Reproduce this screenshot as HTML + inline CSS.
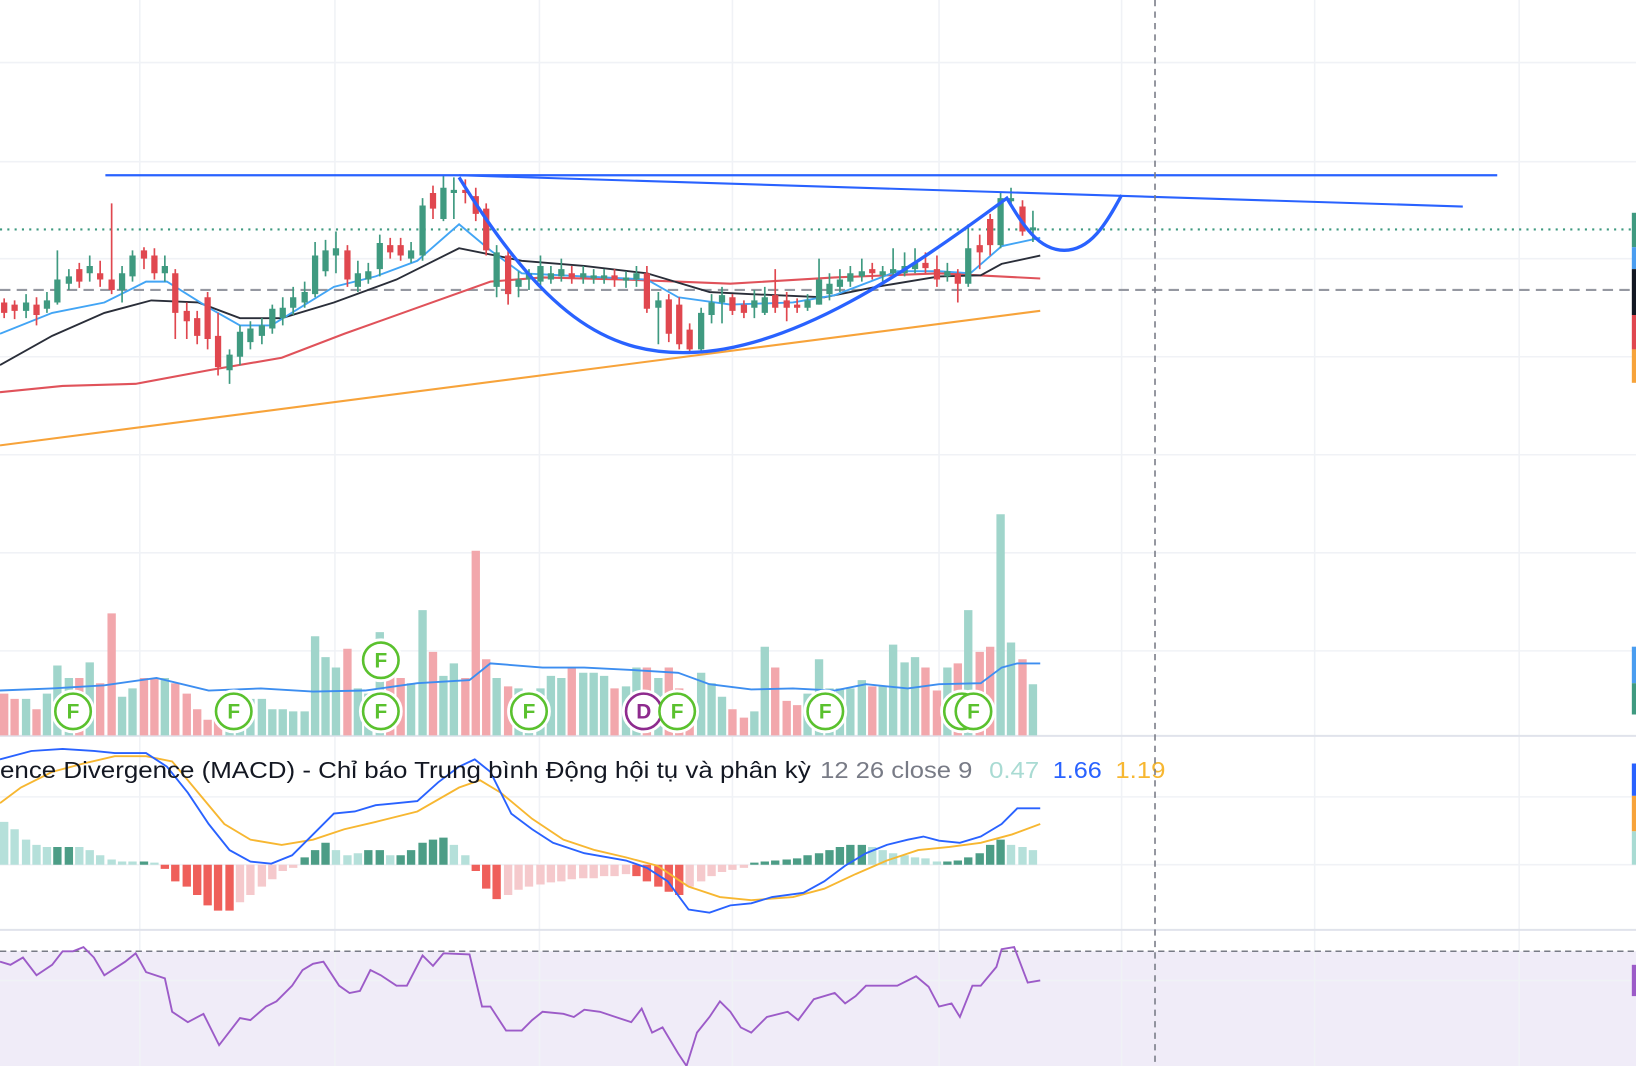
<!DOCTYPE html>
<html><head><meta charset="utf-8"><style>
html,body{margin:0;padding:0;background:#fff;overflow:hidden}
svg{display:block}
text{font-family:"Liberation Sans","Noto Sans CJK SC",sans-serif}
</style></head><body>
<svg width="1636" height="1066" viewBox="0 0 1568 1022" preserveAspectRatio="none" xmlns="http://www.w3.org/2000/svg">
<rect width="1568" height="1022" fill="#fff"/>
<!-- RSI band -->
<rect x="0" y="912" width="1568" height="110" fill="#f0ecf8"/>
<!-- grid -->
<g stroke="#f0f2f6" stroke-width="1.5">
<path d="M134 0V1022M321 0V1022M517 0V1022M702 0V1022M900 0V1022M1075 0V1022M1260 0V1022M1456 0V1022"/>
<path d="M0 60H1568M0 155H1568M0 248H1568M0 342H1568M0 436H1568M0 530H1568M0 624H1568M0 764H1568M0 829H1568M0 940H1568"/>
</g>
<!-- pane separators -->
<path d="M0 705.5H1568M0 891.5H1568" stroke="#e0e3eb" stroke-width="2"/>
<!-- price lines -->
<path d="M0 220H1568" stroke="#3f9a80" stroke-width="2" stroke-dasharray="2 5"/>
<path d="M0 278H1568" stroke="#9598a1" stroke-width="2" stroke-dasharray="10 6"/>
<path d="M0 912H1568" stroke="#787b86" stroke-width="1.5" stroke-dasharray="6 4"/>
<!-- MAs -->
<path d="M0 427L997 298" stroke="#f7a33a" stroke-width="2" fill="none"/>
<path d="M0 376L60 370L130 368L200 355L270 343L330 320L400 295L470 270L520 266L600 268L700 272L800 266L900 262L997 267" stroke="#e0525a" stroke-width="2" fill="none"/>
<path d="M0 350L50 322L100 300L145 288L190 290L230 305L270 305L320 290L380 268L440 238L500 250L560 255L620 262L680 280L720 282L790 285L840 275L900 265L940 264L960 253L997 245" stroke="#2a2e39" stroke-width="1.8" fill="none"/>
<path d="M0 320L50 300L100 290L140 270L160 270L200 295L230 312L260 312L320 275L360 265L400 250L440 215L470 240L500 262L560 265L620 268L650 285L700 292L760 290L800 283L860 260L900 260L930 262L960 236L997 228" stroke="#42a5f5" stroke-width="1.8" fill="none"/>
<!-- candles green -->
<path stroke="#3f9a80" stroke-width="1.6" d="M25 282V305M45 280V300M55 240V292M66 258V278M86 245V270M117 255V290M127 240V270M158 245V270M220 335V368M230 312V350M240 308V335M251 305V330M261 292V320M271 285V312M281 275V302M292 270V295M302 232V285M312 230V265M322 222V262M343 250V280M353 252V272M364 225V265M394 232V252M405 190V250M425 168V212M435 170V210M476 235V285M497 260V285M507 258V278M518 245V275M528 255V272M538 248V270M559 255V272M569 258V272M579 258V272M600 260V276M610 255V275M631 280V330M672 295V338M682 282V310M692 275V310M723 278V305M733 275V302M774 282V298M785 248V292M795 262V288M805 258V280M815 255V275M826 248V270M846 255V270M856 238V265M867 242V265M877 238V262M908 252V270M928 215V275M959 185V238M969 180V198M990 202V232"/>
<path fill="#3f9a80" d="M22 290h6V298h-6zM42 288h6V296h-6zM52 268h6V290h-6zM63 265h6V272h-6zM83 255h6V262h-6zM114 262h6V278h-6zM124 245h6V265h-6zM155 255h6V262h-6zM217 340h6V355h-6zM227 318h6V342h-6zM237 315h6V328h-6zM248 312h6V322h-6zM258 296h6V315h-6zM268 295h6V305h-6zM278 285h6V295h-6zM289 280h6V290h-6zM299 245h6V282h-6zM309 240h6V260h-6zM319 238h6V245h-6zM340 262h6V275h-6zM350 260h6V268h-6zM361 233h6V258h-6zM391 240h6V248h-6zM402 197h6V245h-6zM422 180h6V210h-6zM432 182h6V185h-6zM473 242h6V275h-6zM494 268h6V275h-6zM504 262h6V268h-6zM515 255h6V270h-6zM525 262h6V268h-6zM535 258h6V265h-6zM556 262h6V266h-6zM566 264h6V267h-6zM576 264h6V267h-6zM597 266h6V269h-6zM607 262h6V268h-6zM628 288h6V295h-6zM669 300h6V335h-6zM679 290h6V302h-6zM689 283h6V290h-6zM720 288h6V295h-6zM730 285h6V300h-6zM771 288h6V295h-6zM782 268h6V292h-6zM792 272h6V282h-6zM802 268h6V275h-6zM812 262h6V270h-6zM823 260h6V265h-6zM843 260h6V264h-6zM853 258h6V262h-6zM864 255h6V262h-6zM874 252h6V258h-6zM905 260h6V265h-6zM925 238h6V272h-6zM956 190h6V235h-6zM966 190h6V193h-6zM987 218h6V221h-6z"/>
<!-- candles red -->
<path stroke="#e0474f" stroke-width="1.6" d="M4 286V305M14 288V306M35 285V312M76 252V276M96 250V275M107 195V282M138 237V258M148 238V268M168 258V325M179 290V325M189 298V330M199 280V335M209 300V360M333 235V275M374 228V248M384 228V250M415 178V210M446 172V195M456 180V212M466 195V245M487 240V292M548 255V272M589 258V275M620 255V300M641 282V328M651 285V335M661 310V338M702 282V302M713 288V305M743 258V300M754 280V308M764 286V300M836 252V268M887 242V262M898 245V275M918 258V290M939 225V258M949 205V245M980 192V226"/>
<path fill="#e0474f" d="M1 290h6V300h-6zM11 292h6V298h-6zM32 292h6V302h-6zM73 258h6V270h-6zM93 262h6V268h-6zM104 268h6V278h-6zM135 240h6V248h-6zM145 245h6V262h-6zM165 262h6V300h-6zM176 298h6V308h-6zM186 305h6V322h-6zM196 285h6V325h-6zM206 322h6V352h-6zM330 240h6V268h-6zM371 235h6V242h-6zM381 235h6V245h-6zM412 185h6V200h-6zM443 182h6V185h-6zM453 188h6V205h-6zM463 200h6V240h-6zM484 245h6V282h-6zM545 262h6V266h-6zM586 264h6V268h-6zM617 262h6V296h-6zM638 287h6V320h-6zM648 292h6V330h-6zM658 316h6V335h-6zM699 285h6V298h-6zM710 292h6V300h-6zM740 283h6V295h-6zM751 288h6V295h-6zM761 292h6V295h-6zM833 258h6V262h-6zM884 252h6V257h-6zM895 258h6V268h-6zM915 262h6V272h-6zM936 235h6V242h-6zM946 210h6V235h-6zM977 198h6V222h-6z"/>
<!-- pattern drawings -->
<path d="M101 168H1435" stroke="#2962ff" stroke-width="2.2"/>
<path d="M440 168L1402 198" stroke="#2962ff" stroke-width="2"/>
<path d="M440 170C520 300 580 340 660 338C760 336 870 260 965 190C980 215 995 240 1020 240C1045 240 1060 215 1075 187" stroke="#2962ff" stroke-width="3.2" fill="none"/>
<!-- volume -->
<path fill="#a0d5cb" d="M21 670h8V705h-8zM41 665h8V705h-8zM51 638h8V705h-8zM62 650h8V705h-8zM82 635h8V705h-8zM113 668h8V705h-8zM123 660h8V705h-8zM154 650h8V705h-8zM216 662h8V705h-8zM226 672h8V705h-8zM236 670h8V705h-8zM247 670h8V705h-8zM257 680h8V705h-8zM267 680h8V705h-8zM277 682h8V705h-8zM288 682h8V705h-8zM298 610h8V705h-8zM308 630h8V705h-8zM318 640h8V705h-8zM339 660h8V705h-8zM349 665h8V705h-8zM360 606h8V705h-8zM390 655h8V705h-8zM401 585h8V705h-8zM421 648h8V705h-8zM431 636h8V705h-8zM472 650h8V705h-8zM493 660h8V705h-8zM503 665h8V705h-8zM514 660h8V705h-8zM524 648h8V705h-8zM534 650h8V705h-8zM555 645h8V705h-8zM565 645h8V705h-8zM575 648h8V705h-8zM596 658h8V705h-8zM606 640h8V705h-8zM627 650h8V705h-8zM668 645h8V705h-8zM678 655h8V705h-8zM688 668h8V705h-8zM719 682h8V705h-8zM729 620h8V705h-8zM770 665h8V705h-8zM781 632h8V705h-8zM791 660h8V705h-8zM801 660h8V705h-8zM811 660h8V705h-8zM822 652h8V705h-8zM842 658h8V705h-8zM852 618h8V705h-8zM863 635h8V705h-8zM873 630h8V705h-8zM904 640h8V705h-8zM924 585h8V705h-8zM955 493h8V705h-8zM965 616h8V705h-8zM986 656h8V705h-8z"/>
<path fill="#f2a7ac" d="M0 665h8V705h-8zM10 670h8V705h-8zM31 680h8V705h-8zM72 650h8V705h-8zM92 655h8V705h-8zM103 588h8V705h-8zM134 650h8V705h-8zM144 650h8V705h-8zM164 655h8V705h-8zM175 665h8V705h-8zM185 680h8V705h-8zM195 690h8V705h-8zM205 690h8V705h-8zM329 622h8V705h-8zM370 640h8V705h-8zM380 650h8V705h-8zM411 625h8V705h-8zM442 650h8V705h-8zM452 528h8V705h-8zM462 632h8V705h-8zM483 658h8V705h-8zM544 640h8V705h-8zM585 660h8V705h-8zM616 640h8V705h-8zM637 640h8V705h-8zM647 660h8V705h-8zM657 670h8V705h-8zM698 680h8V705h-8zM709 688h8V705h-8zM739 640h8V705h-8zM750 672h8V705h-8zM760 676h8V705h-8zM832 658h8V705h-8zM883 640h8V705h-8zM894 662h8V705h-8zM914 636h8V705h-8zM935 625h8V705h-8zM945 620h8V705h-8zM976 632h8V705h-8z"/>
<path d="M0 662L50 660L100 657L150 650L200 662L250 660L300 663L350 662L400 655L450 652L470 636L520 640L560 640L600 642L650 645L680 656L720 661L760 660L800 662L830 656L870 660L900 656L940 655L960 640L975 636L997 636" stroke="#3d8ef0" stroke-width="1.8" fill="none"/>
<!-- markers -->
<g font-size="20" font-weight="bold" text-anchor="middle">
<g stroke="#fff" stroke-width="6" fill="none">
<circle cx="70" cy="682" r="18"/><circle cx="224" cy="682" r="18"/><circle cx="365" cy="682" r="18"/><circle cx="365" cy="633" r="18"/><circle cx="507" cy="682" r="18"/><circle cx="617" cy="682" r="18"/><circle cx="649" cy="682" r="18"/><circle cx="791" cy="682" r="18"/><circle cx="922" cy="682" r="18"/><circle cx="933" cy="682" r="18"/>
</g>
<g stroke="#5ac12e" stroke-width="2.5" fill="#fff">
<circle cx="70" cy="682" r="17"/><circle cx="224" cy="682" r="17"/><circle cx="365" cy="682" r="17"/><circle cx="365" cy="633" r="17"/><circle cx="507" cy="682" r="17"/><circle cx="791" cy="682" r="17"/><circle cx="922" cy="682" r="17"/><circle cx="933" cy="682" r="17"/>
</g>
<circle cx="617" cy="682" r="17" stroke="#8e2b8e" stroke-width="2.5" fill="#fff"/>
<circle cx="649" cy="682" r="17" stroke="#5ac12e" stroke-width="2.5" fill="#fff"/>
<g fill="#5ac12e"><text x="70" y="689">F</text><text x="224" y="689">F</text><text x="365" y="689">F</text><text x="365" y="640">F</text><text x="507" y="689">F</text><text x="649" y="689">F</text><text x="791" y="689">F</text><text x="933" y="689">F</text></g>
<text x="617" y="689" fill="#8e2b8e">D</text>
</g>
<!-- MACD histogram -->
<path fill="#4c9d86" d="M51 812h8V829h-8zM62 812h8V829h-8zM134 826h8V829h-8zM288 822h8V829h-8zM298 815h8V829h-8zM308 808h8V829h-8zM349 815h8V829h-8zM360 815h8V829h-8zM380 820h8V829h-8zM390 815h8V829h-8zM401 808h8V829h-8zM411 805h8V829h-8zM421 803h8V829h-8zM719 827h8V829h-8zM729 826h8V829h-8zM739 825h8V829h-8zM750 824h8V829h-8zM760 823h8V829h-8zM770 820h8V829h-8zM781 818h8V829h-8zM791 815h8V829h-8zM801 812h8V829h-8zM811 810h8V829h-8zM822 810h8V829h-8zM904 826h8V829h-8zM914 825h8V829h-8zM924 822h8V829h-8zM935 818h8V829h-8zM945 810h8V829h-8zM955 805h8V829h-8z"/>
<path fill="#b5e0da" d="M0 788h8V829h-8zM10 795h8V829h-8zM21 805h8V829h-8zM31 810h8V829h-8zM41 812h8V829h-8zM72 812h8V829h-8zM82 815h8V829h-8zM92 820h8V829h-8zM103 824h8V829h-8zM113 826h8V829h-8zM123 826h8V829h-8zM144 827h8V829h-8zM318 815h8V829h-8zM329 820h8V829h-8zM339 818h8V829h-8zM370 820h8V829h-8zM431 810h8V829h-8zM442 820h8V829h-8zM832 812h8V829h-8zM842 815h8V829h-8zM852 818h8V829h-8zM863 820h8V829h-8zM873 822h8V829h-8zM883 823h8V829h-8zM894 826h8V829h-8zM965 810h8V829h-8zM976 812h8V829h-8zM986 815h8V829h-8z"/>
<path fill="#ef5f5a" d="M154 829h8V833h-8zM164 829h8V845h-8zM175 829h8V850h-8zM185 829h8V858h-8zM195 829h8V868h-8zM205 829h8V873h-8zM216 829h8V873h-8zM452 829h8V835h-8zM462 829h8V852h-8zM472 829h8V862h-8zM606 829h8V840h-8zM616 829h8V845h-8zM627 829h8V850h-8zM637 829h8V855h-8zM647 829h8V858h-8z"/>
<path fill="#f5c9cc" d="M226 829h8V865h-8zM236 829h8V858h-8zM247 829h8V850h-8zM257 829h8V843h-8zM267 829h8V835h-8zM277 829h8V832h-8zM483 829h8V858h-8zM493 829h8V853h-8zM503 829h8V850h-8zM514 829h8V848h-8zM524 829h8V846h-8zM534 829h8V845h-8zM544 829h8V843h-8zM555 829h8V842h-8zM565 829h8V842h-8zM575 829h8V840h-8zM585 829h8V840h-8zM596 829h8V838h-8zM657 829h8V850h-8zM668 829h8V845h-8zM678 829h8V840h-8zM688 829h8V836h-8zM698 829h8V834h-8zM709 829h8V832h-8z"/>
<!-- MACD lines -->
<path d="M0 770L20 755L50 740L80 732L110 725L140 725L165 730L190 760L215 790L240 805L270 810L300 805L330 795L360 788L400 778L440 755L460 748L480 760L510 785L540 805L570 815L600 822L630 830L660 850L690 860L720 863L760 860L790 852L820 838L850 825L880 815L910 812L940 808L970 800L997 790" stroke="#f7b731" stroke-width="1.8" fill="none"/>
<path d="M0 728L30 720L60 718L90 720L110 722L140 722L160 735L180 760L200 790L220 815L240 826L260 828L280 820L300 800L320 780L340 778L360 772L380 770L400 768L420 750L440 735L455 728L470 740L490 780L510 795L530 808L560 818L600 825L620 832L640 845L660 872L680 875L700 868L720 866L740 860L770 856L790 845L810 830L830 818L850 810L870 805L885 802L900 806L920 808L940 802L960 790L975 775L997 775" stroke="#2962ff" stroke-width="1.8" fill="none"/>
<!-- MACD legend -->
<g font-size="22">
<text x="0" y="746" fill="#131722" textLength="777" lengthAdjust="spacingAndGlyphs">ence Divergence (MACD) - Chỉ báo Trung bình Động hội tụ và phân kỳ</text>
<text x="786" y="746" fill="#787b86" textLength="146" lengthAdjust="spacingAndGlyphs">12 26 close 9</text>
<text x="948" y="746" fill="#a9dbd3" textLength="48" lengthAdjust="spacingAndGlyphs">0.47</text>
<text x="1009" y="746" fill="#2962ff" textLength="47" lengthAdjust="spacingAndGlyphs">1.66</text>
<text x="1069" y="746" fill="#f7b731" textLength="48" lengthAdjust="spacingAndGlyphs">1.19</text>
</g>
<!-- RSI -->
<path d="M0 922L10 925L22 918L35 935L50 925L60 912L70 912L80 908L90 918L100 935L120 922L130 914L140 932L158 938L165 970L180 980L195 972L210 1002L230 976L240 978L255 965L265 960L280 945L290 930L300 924L310 922L325 945L335 952L345 950L355 930L365 935L380 945L390 945L405 916L415 926L425 914L450 915L462 965L470 965L485 988L500 988L510 978L520 970L540 972L550 975L560 968L575 970L590 975L605 980L615 967L625 990L635 985L650 1010L658 1022L668 990L680 975L690 960L700 970L710 985L720 990L735 975L755 970L765 978L780 958L800 952L810 962L820 955L830 945L845 945L860 945L878 936L890 946L900 965L912 962L920 975L932 945L940 945L955 927L960 910L972 908L985 942L997 940" stroke="#9c5bc8" stroke-width="1.8" fill="none"/>
<!-- crosshair -->
<path d="M1107 0V1022" stroke="#787b86" stroke-width="1.5" stroke-dasharray="6 5"/>
<!-- right axis markers -->
<rect x="1564" y="204" width="4" height="33" fill="#3f9a80"/>
<rect x="1564" y="237" width="4" height="21" fill="#4a9df0"/>
<rect x="1564" y="258" width="4" height="44" fill="#131722"/>
<rect x="1564" y="302" width="4" height="33" fill="#e0474f"/>
<rect x="1564" y="335" width="4" height="32" fill="#f7a33a"/>
<rect x="1564" y="620" width="4" height="35" fill="#4a9df0"/>
<rect x="1564" y="655" width="4" height="30" fill="#3f9a80"/>
<rect x="1564" y="732" width="4" height="31" fill="#2962ff"/>
<rect x="1564" y="763" width="4" height="34" fill="#f7a33a"/>
<rect x="1564" y="797" width="4" height="32" fill="#a9dbd3"/>
<rect x="1564" y="925" width="4" height="30" fill="#9c5bc8"/>
</svg>
</body></html>
